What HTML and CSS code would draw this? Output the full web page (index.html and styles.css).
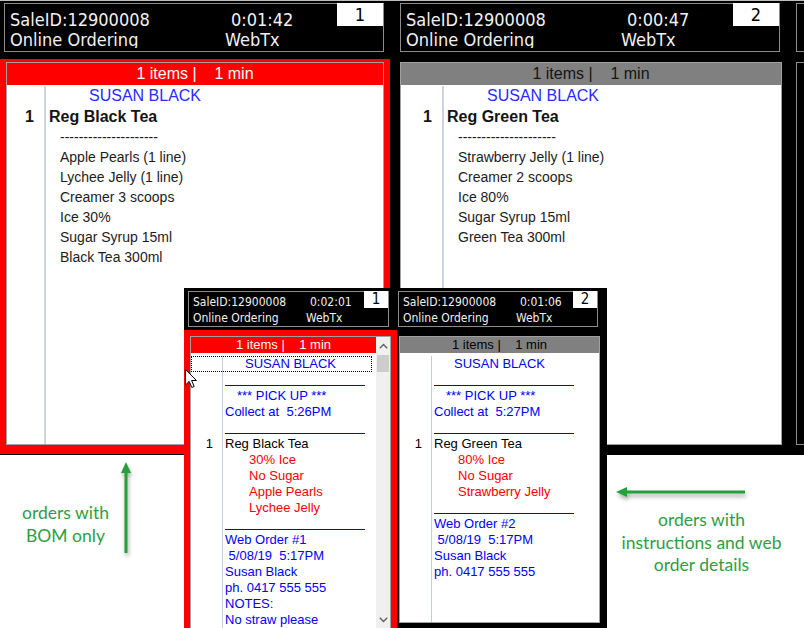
FILE: index.html
```html
<!DOCTYPE html>
<html>
<head>
<meta charset="utf-8">
<title>Kitchen display orders</title>
<link rel="stylesheet" href="styles.css">
</head>
<body>
<div class="big">
  <div class="bcol sel">
    <div class="hdr">
      <div class="htext">
        <div class="hrow"><span class="hl">SaleID:12900008</span><span class="ht">0:01:42</span></div>
        <div class="hrow"><span class="hl">Online Ordering</span><span>WebTx</span></div>
      </div>
      <div class="hnum">1</div>
    </div>
    <div class="frame">
      <div class="panel">
        <div class="bar">1 items |    1 min</div>
        <div class="pbody">
          <div class="r cust"><div class="g"></div><div class="t">SUSAN BLACK</div></div>
          <div class="r item"><div class="g">1</div><div class="t">Reg Black Tea</div></div>
          <div class="r mod"><div class="g"></div><div class="t">---------------------</div></div>
          <div class="r mod"><div class="g"></div><div class="t">Apple Pearls (1 line)</div></div>
          <div class="r mod"><div class="g"></div><div class="t">Lychee Jelly (1 line)</div></div>
          <div class="r mod"><div class="g"></div><div class="t">Creamer 3 scoops</div></div>
          <div class="r mod"><div class="g"></div><div class="t">Ice 30%</div></div>
          <div class="r mod"><div class="g"></div><div class="t">Sugar Syrup 15ml</div></div>
          <div class="r mod"><div class="g"></div><div class="t">Black Tea 300ml</div></div>
          <div class="r fill"><div class="g"></div><div class="t"></div></div>
        </div>
      </div>
    </div>
  </div>
  <div class="bcol c2">
    <div class="hdr">
      <div class="htext">
        <div class="hrow"><span class="hl">SaleID:12900008</span><span class="ht">0:00:47</span></div>
        <div class="hrow"><span class="hl">Online Ordering</span><span>WebTx</span></div>
      </div>
      <div class="hnum">2</div>
    </div>
    <div class="frame">
      <div class="panel">
        <div class="bar">1 items |    1 min</div>
        <div class="pbody">
          <div class="r cust"><div class="g"></div><div class="t">SUSAN BLACK</div></div>
          <div class="r item"><div class="g">1</div><div class="t">Reg Green Tea</div></div>
          <div class="r mod"><div class="g"></div><div class="t">---------------------</div></div>
          <div class="r mod"><div class="g"></div><div class="t">Strawberry Jelly (1 line)</div></div>
          <div class="r mod"><div class="g"></div><div class="t">Creamer 2 scoops</div></div>
          <div class="r mod"><div class="g"></div><div class="t">Ice 80%</div></div>
          <div class="r mod"><div class="g"></div><div class="t">Sugar Syrup 15ml</div></div>
          <div class="r mod"><div class="g"></div><div class="t">Green Tea 300ml</div></div>
          <div class="r fill"><div class="g"></div><div class="t"></div></div>
        </div>
      </div>
    </div>
  </div>
  <div class="bcol c3">
    <div class="hdr"></div>
    <div class="frame"><div class="panel"></div></div>
  </div>
</div>

<div class="small">
  <div class="scol s1">
    <div class="shdr">
      <div class="shtext">
        <div class="hrow"><span class="hl">SaleID:12900008</span><span class="ht">0:02:01</span></div>
        <div class="hrow"><span class="hl">Online Ordering</span><span>WebTx</span></div>
      </div>
      <div class="snum">1</div>
    </div>
    <div class="sframe">
      <div class="spanel">
        <div class="smain">
          <div class="sbarh">1 items |    1 min</div>
          <div class="sbody">
            <div class="sr focus blue"><div class="sg"></div><div class="st cu">SUSAN BLACK</div></div>
            <div class="sr"><div class="sg"></div><div class="st"><span class="ul"></span></div></div>
            <div class="sr blue"><div class="sg"></div><div class="st pk">*** PICK UP ***</div></div>
            <div class="sr blue"><div class="sg"></div><div class="st">Collect at  5:26PM</div></div>
            <div class="sr"><div class="sg"></div><div class="st"><span class="ul"></span></div></div>
            <div class="sr"><div class="sg">1</div><div class="st">Reg Black Tea</div></div>
            <div class="sr red"><div class="sg"></div><div class="st ins">30% Ice</div></div>
            <div class="sr red"><div class="sg"></div><div class="st ins">No Sugar</div></div>
            <div class="sr red"><div class="sg"></div><div class="st ins">Apple Pearls</div></div>
            <div class="sr red"><div class="sg"></div><div class="st ins">Lychee Jelly</div></div>
            <div class="sr"><div class="sg"></div><div class="st"><span class="ul"></span></div></div>
            <div class="sr blue"><div class="sg"></div><div class="st">Web Order #1</div></div>
            <div class="sr blue"><div class="sg"></div><div class="st"> 5/08/19  5:17PM</div></div>
            <div class="sr blue"><div class="sg"></div><div class="st">Susan Black</div></div>
            <div class="sr blue"><div class="sg"></div><div class="st">ph. 0417 555 555</div></div>
            <div class="sr blue"><div class="sg"></div><div class="st">NOTES:</div></div>
            <div class="sr blue"><div class="sg"></div><div class="st">No straw please</div></div>
            <div class="sr sfill"><div class="sg"></div><div class="st"></div></div>
          </div>
        </div>
        <div class="scroll">
          <div class="sarrow"><svg width="9" height="6" viewBox="0 0 9 6"><path d="M0.8 5.2 L4.5 1.5 L8.2 5.2" fill="none" stroke="#606060" stroke-width="1.4"/></svg></div>
          <div class="thumb"></div>
          <div class="sspace"></div>
          <div class="sarrow"><svg width="9" height="6" viewBox="0 0 9 6"><path d="M0.8 0.8 L4.5 4.5 L8.2 0.8" fill="none" stroke="#606060" stroke-width="1.4"/></svg></div>
        </div>
      </div>
    </div>
  </div>
  <div class="scol s2">
    <div class="shdr">
      <div class="shtext">
        <div class="hrow"><span class="hl">SaleID:12900008</span><span class="ht">0:01:06</span></div>
        <div class="hrow"><span class="hl">Online Ordering</span><span>WebTx</span></div>
      </div>
      <div class="snum">2</div>
    </div>
    <div class="sframe">
      <div class="spanel">
        <div class="smain">
          <div class="sbarh">1 items |    1 min</div>
          <div class="sbody">
            <div class="sr blue"><div class="sg"></div><div class="st cu">SUSAN BLACK</div></div>
            <div class="sr"><div class="sg"></div><div class="st"><span class="ul"></span></div></div>
            <div class="sr blue"><div class="sg"></div><div class="st pk">*** PICK UP ***</div></div>
            <div class="sr blue"><div class="sg"></div><div class="st">Collect at  5:27PM</div></div>
            <div class="sr"><div class="sg"></div><div class="st"><span class="ul"></span></div></div>
            <div class="sr"><div class="sg">1</div><div class="st">Reg Green Tea</div></div>
            <div class="sr red"><div class="sg"></div><div class="st ins">80% Ice</div></div>
            <div class="sr red"><div class="sg"></div><div class="st ins">No Sugar</div></div>
            <div class="sr red"><div class="sg"></div><div class="st ins">Strawberry Jelly</div></div>
            <div class="sr"><div class="sg"></div><div class="st"><span class="ul"></span></div></div>
            <div class="sr blue"><div class="sg"></div><div class="st">Web Order #2</div></div>
            <div class="sr blue"><div class="sg"></div><div class="st"> 5/08/19  5:17PM</div></div>
            <div class="sr blue"><div class="sg"></div><div class="st">Susan Black</div></div>
            <div class="sr blue"><div class="sg"></div><div class="st">ph. 0417 555 555</div></div>
            <div class="sr sfill"><div class="sg"></div><div class="st"></div></div>
          </div>
        </div>
      </div>
    </div>
  </div>
</div>

<svg class="cursor" width="13" height="20" viewBox="0 0 13 20"><path d="M0.5 0.5 L0.5 16 L4.2 12.4 L6.8 18.5 L9.2 17.5 L6.6 11.5 L11.5 11.5 Z" fill="#fff" stroke="#000" stroke-width="1"/></svg>

<svg class="arrow a1" width="18" height="100" viewBox="0 0 18 100"><line x1="8" y1="12" x2="8" y2="95" stroke="#26a03a" stroke-width="3"/><polygon points="8,4 3,15 13,15" fill="#26a03a"/></svg>
<svg class="arrow a2" width="140" height="18" viewBox="0 0 140 18"><line x1="13" y1="8" x2="133" y2="8" stroke="#26a03a" stroke-width="3"/><polygon points="4,8 15,3 15,13" fill="#26a03a"/></svg>

<div class="note n1">orders with<br>BOM only</div>
<div class="note n2">orders with<br>instructions and web<br>order details</div>
</body>
</html>
```

FILE: styles.css
```css
* { box-sizing: border-box; }
html, body { margin: 0; padding: 0; }
body {
  width: 804px;
  height: 628px;
  overflow: hidden;
  position: relative;
  background: #fff;
  font-family: "Liberation Sans", Arial, sans-serif;
}

/* ---------- big screenshot ---------- */
.big {
  height: 455px;
  background: #000;
  border-top: 1px solid #bdbdbd;
  padding-top: 2px;
  display: flex;
  gap: 6px;
  overflow: hidden;
}
.bcol {
  flex: 0 0 390px;
  display: flex;
  flex-direction: column;
}
.bcol.c3 { flex: 0 0 20px; }

.hdr {
  margin: 0 6px 0 4px;
  height: 49px;
  flex: none;
  border: 1px solid #8c8c8c;
  background: #000;
  display: flex;
  color: #f2f2f2;
  font-family: "DejaVu Sans Condensed", "DejaVu Sans", sans-serif;
}
.c3 .hdr { margin-right: 0; }
.htext {
  flex: 1;
  height: 44px;
  overflow: hidden;
  padding: 6px 0 0 5px;
  font-size: 18px;
  line-height: 20px;
}
.hrow { display: flex; white-space: pre; }
.htext .hl { width: 215px; }
.htext .ht { margin-left: 6px; }
.hnum {
  width: 46px;
  height: 23px;
  margin-top: -1px;
  background: #fff;
  color: #000;
  font-size: 18px;
  line-height: 23px;
  text-align: center;
}

.frame {
  margin-top: 7px;
  margin-bottom: 1px;
  flex: 1;
  padding: 3px 4px 9px 4px;
}
.sel .frame {
  background: #f00;
  padding: 3px 6px 9px 6px;
}
.c3 .frame { padding: 3px 0 9px 4px; }
.panel {
  height: 100%;
  border: 1px solid #a0a0a0;
  background: #fff;
  display: flex;
  flex-direction: column;
}
.c3 .panel { background: #000; border-color: #8c8c8c; }

.bar {
  height: 22px;
  flex: none;
  line-height: 22px;
  text-align: center;
  font-size: 16px;
  white-space: pre;
  background: #808080;
  color: #141414;
}
.sel .bar { background: #f00; color: #fff; }

.pbody {
  flex: 1;
  display: flex;
  flex-direction: column;
  padding-top: 1px;
}
.r { display: flex; color: #1c1c1c; }
.g {
  width: 39px;
  flex: none;
  border-right: 2px solid #ccd5de;
  text-align: right;
  padding-right: 10px;
}
.c2 .g { width: 43px; }
.t { padding-left: 3px; white-space: pre; }
.r.cust { font-size: 16px; line-height: 20px; color: #2a2aff; }
.r.cust .t { padding-left: 43px; }
.r.item { font-size: 16px; line-height: 21px; font-weight: bold; color: #141414; }
.r.mod { font-size: 14px; line-height: 20px; }
.r.mod .t { padding-left: 14px; }
.r.fill { flex: 1; }

/* ---------- small screenshot overlay ---------- */
.small {
  position: absolute;
  left: 184px;
  top: 288px;
  width: 423px;
  height: 340px;
  background: #000;
  display: flex;
  overflow: hidden;
}
.scol { display: flex; flex-direction: column; }
.s1 { width: 213px; }
.s2 { width: 210px; }
.shdr {
  margin-top: 3px;
  height: 36px;
  flex: none;
  border: 1px solid #8c8c8c;
  display: flex;
  color: #f2f2f2;
  font-family: "DejaVu Sans Condensed", "DejaVu Sans", sans-serif;
  font-size: 12px;
  line-height: 16px;
}
.s1 .shdr { margin-left: 4px; width: 201px; }
.s2 .shdr { margin-left: 1px; width: 200px; }
.shtext {
  flex: 1;
  height: 34px;
  overflow: hidden;
  padding: 2px 0 0 4px;
}
.shtext .hl { width: 113px; }
.shtext .ht { margin-left: 4px; }
.snum {
  width: 24px;
  height: 17px;
  margin-top: -1px;
  background: #fff;
  color: #000;
  font-size: 15px;
  line-height: 17px;
  text-align: center;
}
.sframe {
  margin-top: 3px;
  flex: 1;
  padding: 6px 7px 5px 2px;
}
.s1 .sframe { background: #f00; padding: 6px 6px 5px 6px; }
.spanel {
  height: 100%;
  border: 1px solid #a0a0a0;
  background: #fff;
  display: flex;
}
.smain {
  flex: 1;
  display: flex;
  flex-direction: column;
}
.sbarh {
  height: 16px;
  flex: none;
  line-height: 16px;
  font-size: 13px;
  text-align: center;
  white-space: pre;
  background: #808080;
  color: #000;
}
.s1 .sbarh { background: #f00; color: #fff; }
.sbody {
  flex: 1;
  display: flex;
  flex-direction: column;
  padding-top: 3px;
}
.sr {
  display: flex;
  font-size: 13px;
  line-height: 16px;
  height: 16px;
  color: #000;
}
.sr.blue { color: #0000ff; }
.sr.red { color: #ff0000; }
.sr.focus {
  outline: 1px dotted #000;
  outline-offset: -1px;
  margin-right: 4px;
}
.sg {
  width: 32px;
  flex: none;
  border-right: 1px solid #c3ccd4;
  text-align: right;
  padding-right: 9px;
  color: #000;
}
.st { padding-left: 2px; white-space: pre; }
.st.cu { padding-left: 22px; }
.st.pk { padding-left: 14px; }
.st.ins { padding-left: 26px; }
.ul {
  display: block;
  width: 140px;
  height: 14px;
  border-bottom: 1px solid #0000ff;
}
.sr.sfill { flex: 1; height: auto; }

.scroll {
  width: 14px;
  flex: none;
  background: #f0f0f0;
  display: flex;
  flex-direction: column;
  align-items: center;
}
.sarrow {
  height: 17px;
  display: flex;
  align-items: center;
  justify-content: center;
}
.thumb {
  width: 12px;
  height: 17px;
  margin-top: 1px;
  background: #cdcdcd;
}
.sspace { flex: 1; }

.cursor {
  position: absolute;
  left: 185px;
  top: 369px;
}

/* ---------- annotations ---------- */
.arrow {
  position: absolute;
  filter: drop-shadow(1px 3px 2px rgba(0, 0, 0, 0.35));
}
.a1 { left: 118px; top: 458px; }
.a2 { left: 612px; top: 484px; }
.note {
  position: absolute;
  color: #2e9e42;
  font-family: Lato, "Open Sans", sans-serif;
  font-size: 17.5px;
  line-height: 23px;
  text-align: center;
}
.n1 { left: 0; top: 501px; width: 131px; }
.n2 { left: 601px; top: 509px; width: 201px; line-height: 22.5px; }
```
